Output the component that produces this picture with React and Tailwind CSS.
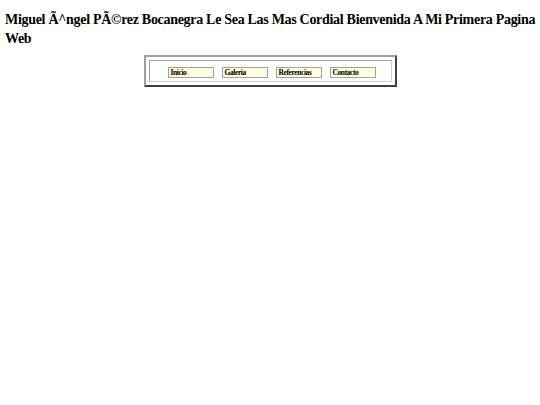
export default function App() {
  const links = ['Inicio', 'Galeria', 'Referencias', 'Contacto']

  return (
    <div className="min-h-screen bg-white text-black font-['Liberation_Serif',serif]">
      <h1 className="pl-[5px] pt-[10px] text-[14px] leading-[19px] tracking-[-0.3px] font-bold">
        Miguel Ã^ngel PÃ©rez Bocanegra Le Sea Las Mas Cordial Bienvenida A Mi Primera Pagina Web
      </h1>

      {/* menu table */}
      <div className="flex justify-center mt-[7px]">
        <div className="w-[253px] h-[32px] p-[3px] border-2 border-t-[#a0a0a0] border-l-[#a0a0a0] border-r-[#404040] border-b-[#404040]">
          <div className="h-full flex items-end gap-[8px] pl-[18px] pb-[3px] border border-t-[#a0a0a0] border-l-[#a0a0a0] border-r-[#d0d0d0] border-b-[#d0d0d0]">
            {links.map(l => (
              <a
                key={l}
                href="#"
                className="w-[46px] h-[11px] flex items-center px-[2px] bg-[#ffffdd] border border-[#a0a0a0] text-[7.5px] tracking-[-0.4px] font-bold leading-none text-black"
              >
                {l}
              </a>
            ))}
          </div>
        </div>
      </div>
    </div>
  )
}
